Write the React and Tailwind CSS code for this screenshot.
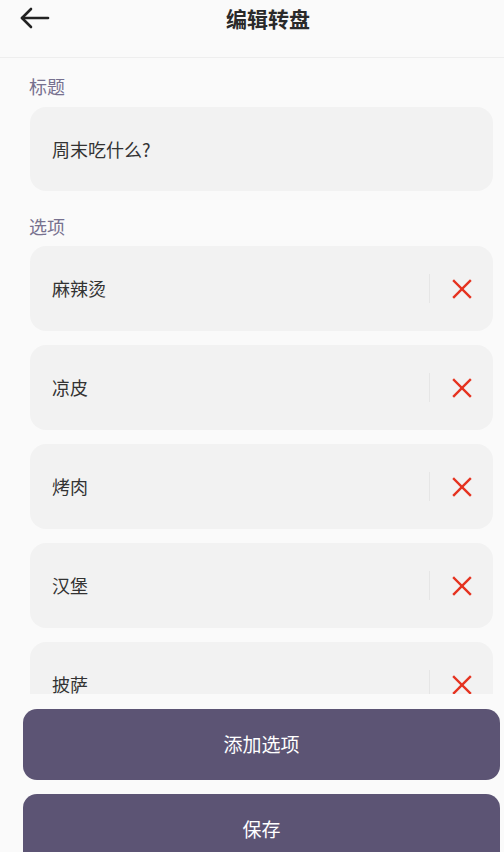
import React, { useState } from 'react'

const font = { fontFamily: '"Noto Sans CJK SC", "Noto Sans", sans-serif' }

const BackArrow = () => (
  <svg width="32" height="24" viewBox="0 0 32 24" fill="none" stroke="#222" strokeWidth="2.6" strokeLinecap="round" strokeLinejoin="round">
    <path d="M29 12H3" />
    <path d="M12 3L3 12L12 21" />
  </svg>
)

const CloseIcon = () => (
  <svg width="20" height="20" viewBox="0 0 20 20" fill="none" stroke="#e5321f" strokeWidth="2.4" strokeLinecap="square">
    <path d="M2 2L18 18" />
    <path d="M18 2L2 18" />
  </svg>
)

const App = () => {
  const [title, setTitle] = useState('周末吃什么?')
  const [options, setOptions] = useState(['麻辣烫', '凉皮', '烤肉', '汉堡', '披萨'])

  const removeOption = (idx) => setOptions(options.filter((_, i) => i !== idx))

  return (
    <div className="h-[852px] w-full flex flex-col bg-[#fafafa] overflow-hidden" style={font}>
      <div className="h-[58px] shrink-0 flex items-start border-b border-[#eeeeee]">
        <button className="w-[56px] h-[36px] flex items-center justify-center pl-[14px] cursor-pointer">
          <BackArrow />
        </button>
        <h1 className="flex-1 text-center pr-[24px] pt-[3px] text-[21px] font-bold text-[#2a2a2a] leading-[30px]">编辑转盘</h1>
      </div>

      <div className="flex-1 min-h-0 overflow-hidden pl-[30px] pr-[11px] pt-[16px]">
        <label className="block text-[18px] leading-[24px] text-[#77718f] ml-[-1px] mb-[9px]">标题</label>
        <div className="h-[84px] rounded-[16px] bg-[#f2f2f2] flex items-center px-[22px]">
          <input
            className="w-full bg-transparent outline-none text-[18px] text-[#333]"
            value={title}
            onChange={(e) => setTitle(e.target.value)}
          />
        </div>

        <label className="block text-[18px] leading-[24px] text-[#77718f] ml-[-1px] mt-[23px] mb-[8px]">选项</label>
        <div className="flex flex-col gap-[14px]">
          {options.map((opt, idx) => (
            <div key={idx} className="h-[85px] shrink-0 rounded-[16px] bg-[#f2f2f2] flex items-center">
              <input
                className="flex-1 min-w-0 bg-transparent outline-none pl-[22px] text-[18px] text-[#333]"
                value={opt}
                onChange={(e) => setOptions(options.map((o, i) => (i === idx ? e.target.value : o)))}
              />
              <div className="w-px h-[29px] bg-[#e6e6e6]" />
              <button onClick={() => removeOption(idx)} className="w-[63px] h-full flex items-center justify-center cursor-pointer">
                <CloseIcon />
              </button>
            </div>
          ))}
        </div>
      </div>

      <div className="shrink-0 h-[158px] pl-[23px] pr-[4px] pt-[15px] flex flex-col gap-[14px]">
        <button className="h-[71px] shrink-0 rounded-[14px] bg-[#5c5474] text-white text-[19px] cursor-pointer">添加选项</button>
        <button className="h-[71px] shrink-0 rounded-[14px] bg-[#5c5474] text-white text-[19px] cursor-pointer">保存</button>
      </div>
    </div>
  )
}

export default App
